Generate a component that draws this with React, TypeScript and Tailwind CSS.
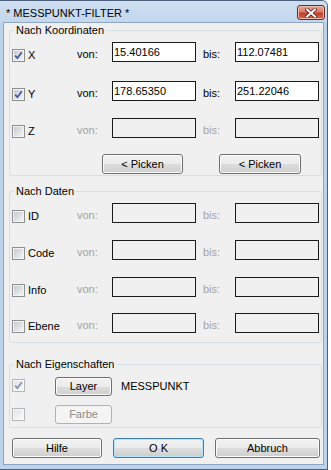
import React from 'react';

const font = "font-['Liberation_Sans',Arial,sans-serif]";

function CheckBox({ checked = false, faded = false }: { checked?: boolean; faded?: boolean }) {
  return (
    <div
      className={`w-[13px] h-[13px] shrink-0 border p-[1px] ${
        faded ? 'border-[#b4b6b8] bg-[#f7f7f7]' : 'border-[#8e8f8f] bg-[#f4f4f4]'
      }`}
    >
      <div
        className={`w-full h-full ${
          faded
            ? 'bg-[linear-gradient(135deg,#e2e4e6_0%,#f8f8f8_100%)]'
            : 'bg-[linear-gradient(135deg,#c6cbd1_0%,#f3f3f4_100%)]'
        }`}
      >
        {checked && (
          <svg width="9" height="9" viewBox="0 0 9 9">
            <path
              d="M1.2 4.6 L3.4 7.2 L7.8 1.2"
              fill="none"
              stroke={faded ? '#7f8fb8' : '#3d579c'}
              strokeWidth="1.7"
            />
          </svg>
        )}
      </div>
    </div>
  );
}

function TextBox({ value, enabled }: { value?: string; enabled: boolean }) {
  return (
    <div
      className={`w-[84px] h-[20px] border border-[#1a1a1a] flex items-center pl-[1px] text-[11px] text-black ${
        enabled ? 'bg-white' : 'bg-[#f0f0f0]'
      }`}
    >
      {value}
    </div>
  );
}

function Button({
  label,
  width,
  height = 20,
  variant = 'normal',
}: {
  label: string;
  width: string;
  height?: number;
  variant?: 'normal' | 'default' | 'disabled';
}) {
  const base = `${width} ${height === 19 ? 'h-[19px]' : 'h-[20px]'} rounded-[3px] border flex items-center justify-center text-[11px]`;
  if (variant === 'disabled')
    return <div className={`${base} border-[#adb2b5] bg-[#f4f4f4] text-[#8a8a8a]`}>{label}</div>;
  if (variant === 'default')
    return (
      <div
        className={`${base} border-[#3c7fb1] text-black shadow-[inset_0_0_0_1px_#b6e3fb] bg-[linear-gradient(to_bottom,#f2f2f2_0%,#ebebeb_50%,#dddddd_50%,#cfcfcf_100%)]`}
      >
        {label}
      </div>
    );
  return (
    <div
      className={`${base} border-[#707070] text-black shadow-[inset_0_0_0_1px_#fcfcfc] bg-[linear-gradient(to_bottom,#f2f2f2_0%,#ebebeb_50%,#dddddd_50%,#cfcfcf_100%)]`}
    >
      {label}
    </div>
  );
}

function RangeRow({
  label,
  checked,
  from,
  to,
  enabled,
  className,
}: {
  label: string;
  checked: boolean;
  from?: string;
  to?: string;
  enabled: boolean;
  className: string;
}) {
  const hint = enabled ? 'text-black' : 'text-[#a3a3a3]';
  return (
    <div className={`flex items-center h-[20px] pl-[2px] ${className}`}>
      <div className="w-[65px] flex items-center gap-[3px] mt-[7px] text-black">
        <CheckBox checked={checked} />
        <span className="leading-[13px]">{label}</span>
      </div>
      <span className={`w-[35px] mt-[4px] leading-[13px] ${hint}`}>von:</span>
      <TextBox value={from} enabled={enabled} />
      <span className={`w-[32px] ml-[7px] mt-[4px] leading-[13px] ${hint}`}>bis:</span>
      <TextBox value={to} enabled={enabled} />
    </div>
  );
}

function Group({ title, className, children }: { title: string; className: string; children: React.ReactNode }) {
  return (
    <fieldset className={`ml-[5px] w-[313px] border border-[#d5dfe5] rounded-[3px] ${className}`}>
      <legend className="ml-[4px] px-[2px] leading-[13px] text-black">{title}</legend>
      {children}
    </fieldset>
  );
}

export default function App() {
  return (
    <div className={`w-[331px] h-[470px] bg-white ${font} text-[11px]`}>
      <div className="w-[328px] h-[470px] flex flex-col bg-[#bdd3ec] border-t border-r border-b border-[#4b5e7a] rounded-tr-[6px]">
        <div className="h-[21px] flex items-start shrink-0 bg-[linear-gradient(to_bottom,#cfdff1_0%,#c3d7ee_100%)] rounded-tr-[5px]">
          <span className="pl-[6px] pt-[6px] leading-[13px] text-black">* MESSPUNKT-FILTER *</span>
          <div className="ml-auto mr-[2px] mt-[4px] w-[28px] h-[15px] rounded-[3px] border border-[#6e2a1f] flex items-center justify-center bg-[linear-gradient(to_bottom,#e9aa9c_0%,#d77a66_45%,#c2412a_55%,#d3674d_100%)] shadow-[inset_0_0_0_1px_#f0b9ad]">
            <svg width="12" height="10" viewBox="0 0 12 10">
              <path d="M2 1.5 L10 8.5 M10 1.5 L2 8.5" stroke="#5a1d14" strokeWidth="3.6" strokeLinecap="square" />
              <path d="M2 1.5 L10 8.5 M10 1.5 L2 8.5" stroke="#ffffff" strokeWidth="2" strokeLinecap="square" />
            </svg>
          </div>
        </div>

        <div className="flex-1 ml-[3px] mr-[3px] mb-[4px] border border-[#8fa6c2] bg-[#f0f0f0] flex flex-col">
          <Group title="Nach Koordinaten" className="mt-[1px] pb-[1px]">
            <RangeRow label="X" checked from="15.40166" to="112.07481" enabled className="mt-[5px]" />
            <RangeRow label="Y" checked from="178.65350" to="251.22046" enabled className="mt-[19px]" />
            <RangeRow label="Z" checked={false} enabled={false} className="mt-[17px]" />
            <div className="flex mt-[16px] pl-[92px] gap-[36px]">
              <Button label="< Picken" width="w-[81px]" />
              <Button label="< Picken" width="w-[82px]" />
            </div>
          </Group>

          <Group title="Nach Daten" className="mt-[9px] pb-[9px]">
            <RangeRow label="ID" checked={false} enabled={false} className="mt-[5px]" />
            <RangeRow label="Code" checked={false} enabled={false} className="mt-[17px]" />
            <RangeRow label="Info" checked={false} enabled={false} className="mt-[17px]" />
            <RangeRow label="Ebene" checked={false} enabled={false} className="mt-[16px]" />
          </Group>

          <Group title="Nach Eigenschaften" className="mt-[15px] pb-[3px]">
            <div className="flex items-center h-[19px] mt-[6px] pl-[2px]">
              <div className="w-[43px] -mt-[2px]">
                <CheckBox checked faded />
              </div>
              <Button label="Layer" width="w-[57px]" height={19} />
              <span className="ml-[9px] text-black">MESSPUNKT</span>
            </div>
            <div className="flex items-center h-[19px] mt-[9px] pl-[2px]">
              <div className="w-[43px]">
                <CheckBox faded />
              </div>
              <Button label="Farbe" width="w-[57px]" height={19} variant="disabled" />
            </div>
          </Group>

          <div className="flex mt-[10px] pl-[8px] gap-[11px]">
            <Button label="Hilfe" width="w-[90px]" />
            <Button label="O K" width="w-[91px]" variant="default" />
            <Button label="Abbruch" width="w-[105px]" />
          </div>
        </div>
      </div>
    </div>
  );
}
